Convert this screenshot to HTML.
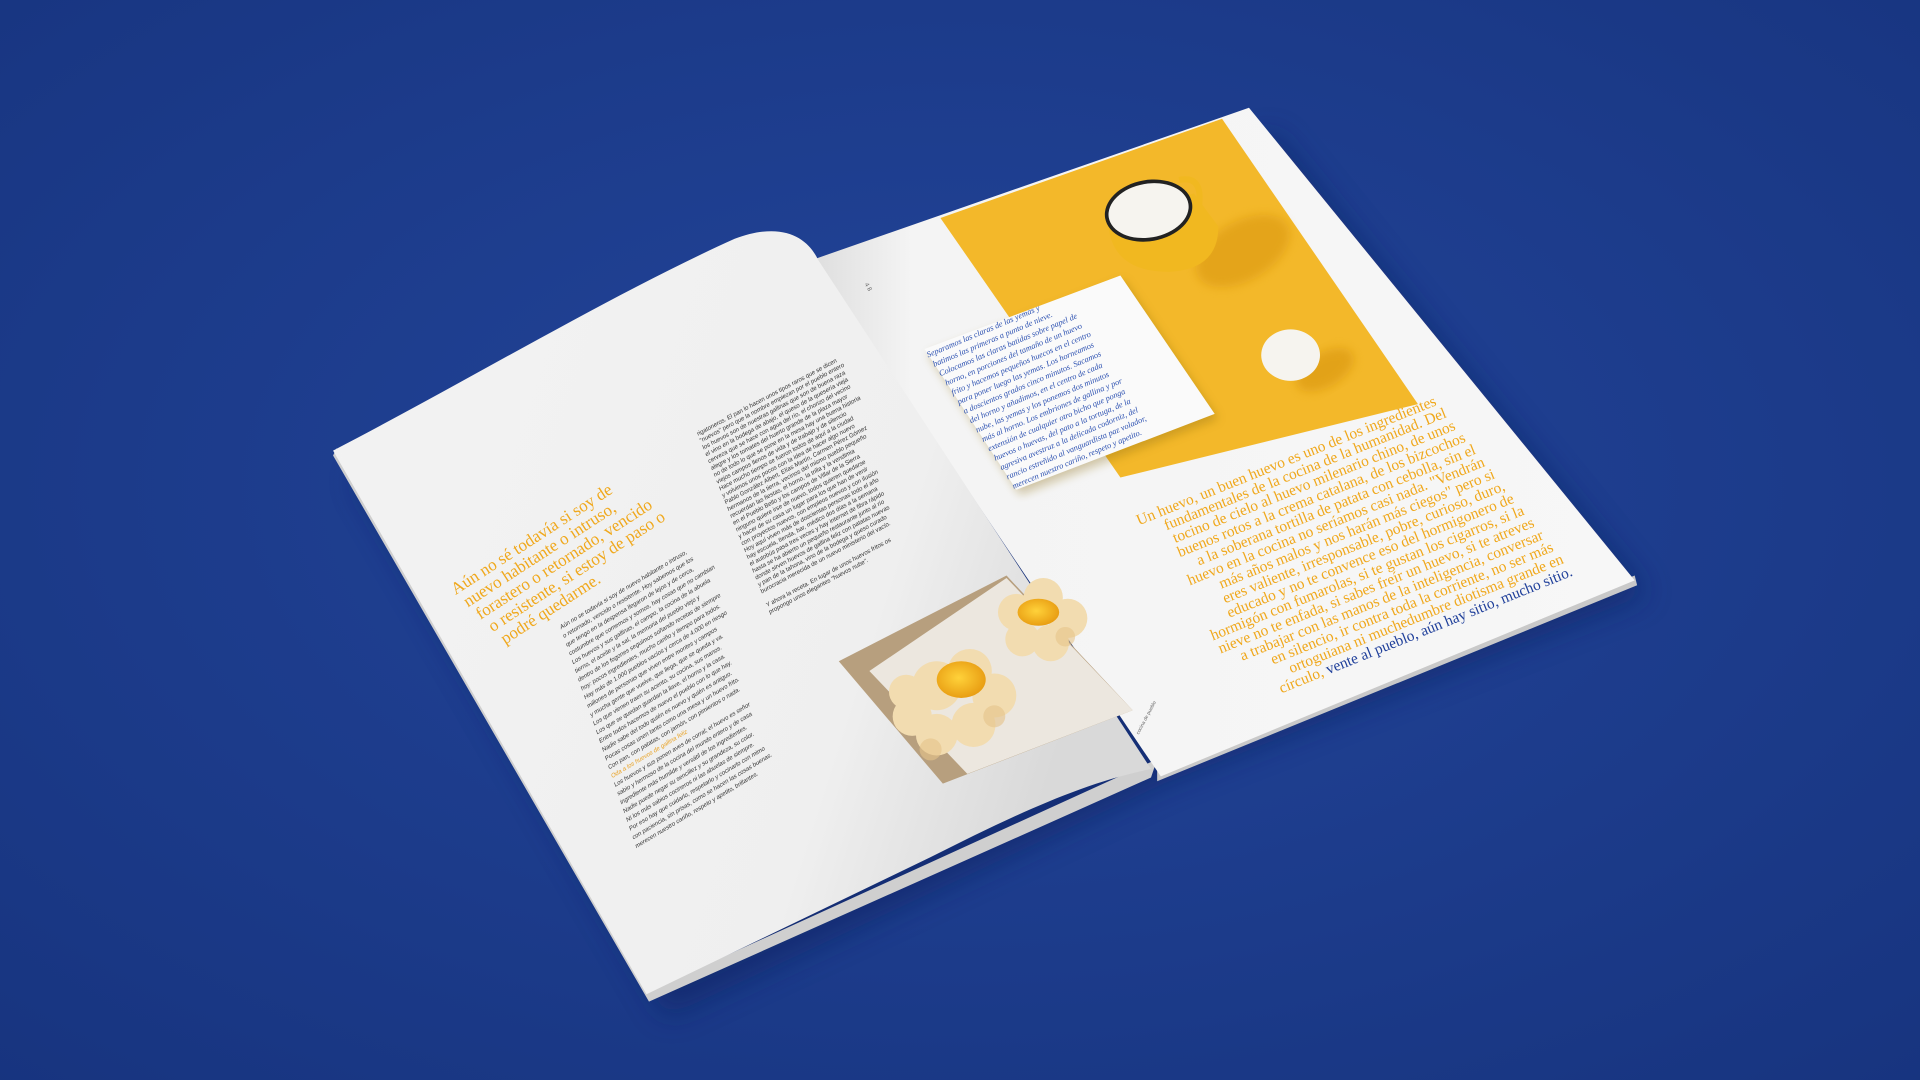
<!DOCTYPE html>
<html><head><meta charset="utf-8"><style>
html,body{margin:0;padding:0;width:1920px;height:1080px;overflow:hidden;background:#1f3f8f}
svg{display:block}
.b{font-family:"Liberation Sans",sans-serif;font-size:5px;fill:#333}
.o{font-family:"Liberation Serif",serif;fill:#f0a81c}
.h{font-family:"Liberation Serif",serif;font-style:italic;fill:#2a4fb0;font-size:6.8px}
</style></head><body>
<svg width="1920" height="1080" viewBox="0 0 1568 882" xmlns="http://www.w3.org/2000/svg">
<defs>
<radialGradient id="bg" cx="0.5" cy="0.45" r="0.75">
<stop offset="0" stop-color="#23459a"/><stop offset="1" stop-color="#17347f"/></radialGradient>
<linearGradient id="lp" x1="0" y1="0" x2="1" y2="0.3">
<stop offset="0" stop-color="#f3f3f3"/><stop offset="0.75" stop-color="#efefef"/><stop offset="1" stop-color="#d9d9d9"/></linearGradient>
<linearGradient id="rp" x1="0" y1="0" x2="1" y2="0">
<stop offset="0" stop-color="#dedede"/><stop offset="0.12" stop-color="#f4f4f4"/><stop offset="1" stop-color="#f7f7f7"/></linearGradient>
<filter id="sh" x="-20%" y="-20%" width="140%" height="140%"><feGaussianBlur stdDeviation="12"/></filter>
<filter id="bl" x="-20%" y="-20%" width="140%" height="140%"><feGaussianBlur stdDeviation="4"/></filter>
<radialGradient id="egg" cx="0.45" cy="0.45" r="0.6"><stop offset="0" stop-color="#ffd23a"/><stop offset="1" stop-color="#e79a10"/></radialGradient>
</defs>
<rect width="1568" height="882" fill="url(#bg)"/>
<path d="M290,390 L545,830 L950,640 L1345,485 L1040,110 Z" fill="#0c2060" opacity="0.55" filter="url(#sh)"/>
<path d="M272,372 L530,818 L940,635 L945,620 L528,810 L275,366 Z" fill="#cfcfcf"/>
<path d="M945,638 L1337,478 L1335,470 L945,628 Z" fill="#c9c9c9"/>
<path d="M664,212 L1020,88 L1335,474 L948,634 L935,615 Z" fill="url(#rp)"/>
<path d="M272,368 C380,312 500,240 600,195 C640,180 660,195 668,212 L940,628 C880,640 820,670 760,700 L528,812 Z" fill="url(#lp)"/>
<!-- yellow image -->
<path d="M768,178 L998,97 L1158,330 L915,390 Z" fill="#f3b82a"/>
<ellipse cx="1015" cy="205" rx="42" ry="24" fill="#d8940f" opacity="0.55" transform="rotate(-30 1015 205)" filter="url(#bl)"/>
<path d="M905,178 Q905,222 955,222 Q995,220 995,185 L975,158 Z" fill="#f1b820"/>
<ellipse cx="938" cy="172" rx="36" ry="25" fill="#222" transform="rotate(-10 938 172)"/>
<ellipse cx="938" cy="172" rx="33" ry="22" fill="#f6f4ef" transform="rotate(-10 938 172)"/>
<path d="M963,147 q20,-4 16,22" stroke="#f1b820" stroke-width="5" fill="none"/>
<ellipse cx="1082" cy="302" rx="26" ry="14" fill="#d8940f" opacity="0.6" transform="rotate(-30 1082 302)" filter="url(#bl)"/>
<ellipse cx="1054" cy="290" rx="24" ry="21" fill="#f6f4ef"/>
<!-- note card -->
<path d="M755,285 L915,225 L992,338 L830,400 Z" fill="#8a6a10" opacity="0.35" transform="translate(3,4)" filter="url(#bl)"/>
<path d="M755,285 L915,225 L992,338 L830,400 Z" fill="#fafafa"/>
<g transform="translate(758,292) rotate(-23)">
<text class="h" y="0">Separamos las claras de las yemas y</text>
<text class="h" x="1.6" y="9">batimos las primeras a punto de nieve.</text>
<text class="h" x="3.2" y="18">Colocamos las claras batidas sobre papel de</text>
<text class="h" x="4.8" y="27">horno, en porciones del tamaño de un huevo</text>
<text class="h" x="6.4" y="36">frito y hacemos pequeños huecos en el centro</text>
<text class="h" x="8" y="45">para poner luego las yemas. Los horneamos</text>
<text class="h" x="9.6" y="54">a doscientos grados cinco minutos. Sacamos</text>
<text class="h" x="11.2" y="63">del horno y añadimos, en el centro de cada</text>
<text class="h" x="12.8" y="72">nube, las yemas y los ponemos dos minutos</text>
<text class="h" x="14.4" y="81">más al horno. Los embriones de gallina y por</text>
<text class="h" x="16" y="90">extensión de cualquier otro bicho que ponga</text>
<text class="h" x="17.6" y="99">huevos o huevas, del pato a la tortuga, de la</text>
<text class="h" x="19.2" y="108">agresiva avestruz a la delicada codorniz, del</text>
<text class="h" x="20.8" y="117">rancio estreñido al vanguardista paz volador,</text>
<text class="h" x="22.4" y="126">merecen nuestro cariño, respeto y apetito.</text>
</g>
<!-- right page large text -->
<g transform="translate(903,440) rotate(-22)" class="o" font-size="12.6" text-anchor="end">
<text x="292" y="0">Un huevo, un buen huevo es uno de los ingredientes</text>
<text x="296" y="12.2">fundamentales de la cocina de la humanidad. Del</text>
<text x="299" y="24.4">tocino de cielo al huevo milenario chino, de unos</text>
<text x="303" y="36.6">buenos rotos a la crema catalana, de los bizcochos</text>
<text x="307" y="48.8">a la soberana tortilla de patata con cebolla, sin el</text>
<text x="310" y="61">huevo en la cocina no seríamos casi nada. "Vendrán</text>
<text x="314" y="73.2">más años malos y nos harán más ciegos" pero si</text>
<text x="318" y="85.4">eres valiente, irresponsable, pobre, curioso, duro,</text>
<text x="321" y="97.6">educado y no te convence eso del hormigonero de</text>
<text x="325" y="109.8">hormigón con fumarolas, si te gustan los cigarros, si la</text>
<text x="329" y="122">nieve no te enfada, si sabes freír un huevo, si te atreves</text>
<text x="332" y="134.2">a trabajar con las manos de la inteligencia, conversar</text>
<text x="336" y="146.4">en silencio, ir contra toda la corriente, no ser más</text>
<text x="340" y="158.6">ortoguiana ni muchedumbre diotisma grande en</text>
<text x="343" y="170.8">círculo, <tspan fill="#1f3f9a">vente al pueblo, aún hay sitio, mucho sitio.</tspan></text>
</g>
<!-- left headline -->
<g transform="translate(372,486) rotate(-33)" class="o" font-size="14">
<text y="0">Aún no sé todavía si soy de</text>
<text x="3" y="14">nuevo habitante o intruso,</text>
<text x="6" y="28">forastero o retornado, vencido</text>
<text x="9" y="42">o resistente, si estoy de paso o</text>
<text x="12" y="56">podré quedarme.</text>
</g>
<!-- left body col 1 -->
<g transform="translate(458,514) rotate(-31) skewX(-12)" class="b" font-size="4.6">
<text y="0">Aún no se todavía si soy de nuevo habitante o intruso,</text>
<text y="7.4">o retornado, vencido o resistente. Hoy sabemos que los</text>
<text y="14.8">que tengo en la despensa llegaron de lejos y de cerca,</text>
<text y="22.2">costumbre que comemos y somos, hay cosas que no cambian</text>
<text y="29.6">Los huevos y sus gallinas, el campo, la cocina de la abuela</text>
<text y="37">tierno, el aceite y la sal, la memoria del pueblo viejo y</text>
<text y="44.4">dentro de los fogones seguimos soñando recetas de siempre</text>
<text y="51.8">hoy: pocos ingredientes, mucho cariño y tiempo para todos.</text>
<text y="59.2">Hay más de 1.000 pueblos vacíos y cerca de 4.000 en riesgo</text>
<text y="66.6">millones de personas que viven entre montes y campos</text>
<text y="74">y mucha gente que vuelve, que llega, que se queda y va.</text>
<text y="81.4">Los que vienen traen su acento, su cocina, sus manos.</text>
<text y="88.8">Los que se quedan guardan la llave, el horno y la casa.</text>
<text y="96.2">Entre todos hacemos de nuevo el pueblo con lo que hay.</text>
<text y="103.6">Nadie sabe del todo quién es nuevo y quién es antiguo.</text>
<text y="111">Pocas cosas unen tanto como una mesa y un huevo frito.</text>
<text y="118.4">Con pan, con patatas, con jamón, con pimientos o nada.</text>
<text y="125.8" fill="#e8a020">Oda a los huevos de gallina feliz</text>
<text y="133.2">Los huevos y sus ponen aves de corral; el huevo es señor</text>
<text y="140.6">sabio y hermoso de la cocina del mundo entero y de casa</text>
<text y="148">ingrediente más humilde y versátil de los ingredientes.</text>
<text y="155.4">Nadie puede negar su sencillez y su grandeza, su color.</text>
<text y="162.8">Ni los más sabios cocineros ni las abuelas de siempre.</text>
<text y="170.2">Por eso hay que cuidarlo, respetarlo y cocinarlo con mimo</text>
<text y="177.6">con paciencia, sin prisas, como se hacen las cosas buenas.</text>
<text y="185">merecen nuestro cariño, respeto y apetito, brillantes.</text>
</g>
<!-- left body col 2 -->
<g transform="translate(570,356) rotate(-28) skewX(-6)" class="b">
<text y="0">rigatoneros. El pan lo hacen unos tipos raros que se dicen</text>
<text y="6">"nuevos" pero que la nombre empiezan por el pueblo entero</text>
<text y="12">los huevos son de nuestras gallinas que son de buena raza</text>
<text y="18">el vino en la bodega de abajo, el queso de la quesería vieja</text>
<text y="24">cerveza que se hace con agua del río, el chorizo del vecino</text>
<text y="30">alegre y los tomates del huerto grande de la plaza mayor</text>
<text y="36">no de todo lo que se pone en la mesa hay una buena historia</text>
<text y="42">viejos campos llenos de vida y de trabajo y de silencio</text>
<text y="48">Hace mucho tiempo se fueron todos de aquí a la ciudad</text>
<text y="54">y volvimos unos pocos con la idea de hacer algo nuevo</text>
<text y="60">Pablo González Albert, Elías Martín, Carmen Pérez Gómez</text>
<text y="66">hermanos de la tierra, vecinos del mismo pueblo pequeño</text>
<text y="72">recuerdan las fiestas, el horno, la trilla y la vendimia</text>
<text y="78">en el Pueblo Bello y los campos de Villar de la Sierra</text>
<text y="84">ninguno quiere irse de nuevo, todos quieren quedarse</text>
<text y="90">y hacer de su casa un lugar para los que han de venir</text>
<text y="96">con proyectos nuevos, con empleos nuevos y con ilusión</text>
<text y="102">Hoy aquí viven más de doscientas personas todo el año</text>
<text y="108">hay escuela, tienda, bar, médico dos días a la semana</text>
<text y="114">el autobús pasa tres veces y hay internet de fibra rápido</text>
<text y="120">hasta se ha abierto un pequeño restaurante junto al río</text>
<text y="126">donde sirven huevos de gallina feliz con patatas nuevas</text>
<text y="132">y pan de la tahona, vino de la bodega y queso curado</text>
<text y="138">burocracia merecida de un nuevo ministerio del vacío.</text>
<text y="150">Y ahora la receta. En lugar de unos huevos fritos os</text>
<text y="156">propongo unos elegantes "huevos nube".</text>
</g>
<!-- egg photo -->
<path d="M685,540 L822,470 L925,580 L770,640 Z" fill="#b79f7e"/>
<path d="M710,548 L822,472 L925,580 L790,632 Z" fill="#ece7df"/>
<g fill="#f2dcb0">
<circle cx="745" cy="585" r="16"/><circle cx="765" cy="560" r="20"/><circle cx="792" cy="548" r="18"/><circle cx="812" cy="568" r="18"/><circle cx="795" cy="592" r="18"/><circle cx="765" cy="600" r="17"/><circle cx="740" cy="565" r="14"/>
<circle cx="830" cy="500" r="15"/><circle cx="852" cy="488" r="16"/><circle cx="872" cy="505" r="16"/><circle cx="858" cy="525" r="15"/><circle cx="835" cy="522" r="14"/>
</g>
<g fill="#e6c48a" opacity="0.6"><circle cx="760" cy="612" r="9"/><circle cx="812" cy="585" r="9"/><circle cx="870" cy="520" r="8"/></g>
<ellipse cx="785" cy="555" rx="20" ry="15" fill="url(#egg)"/>
<ellipse cx="848" cy="500" rx="17" ry="11" fill="url(#egg)"/>
<text x="706" y="232" font-size="5" font-family="Liberation Sans" fill="#666" transform="rotate(60 706 232)">4 8</text>
<text x="930" y="600" font-size="4" font-family="Liberation Sans" fill="#666" transform="rotate(-62 930 600)">cocina de pueblo</text>
</svg>
</body></html>
